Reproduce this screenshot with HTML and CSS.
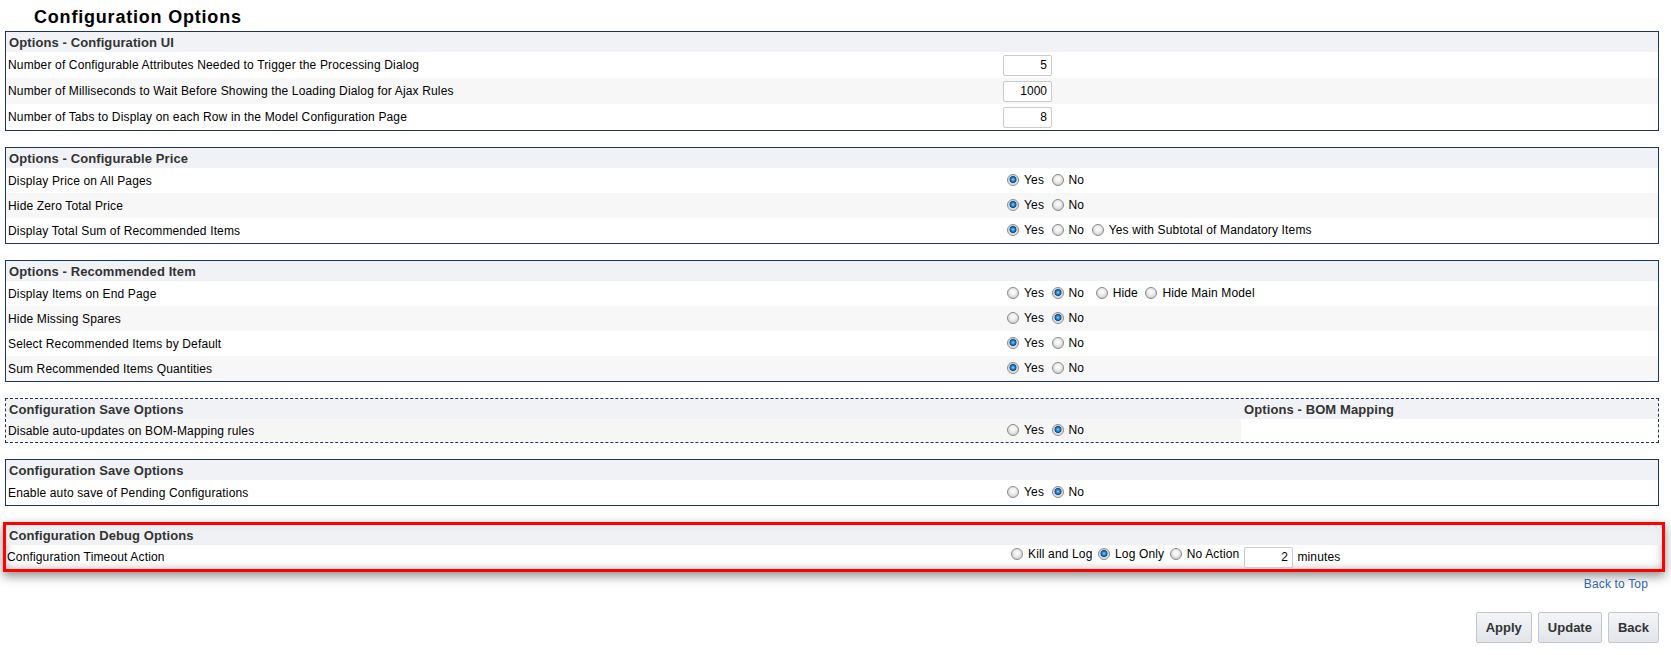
FILE: index.html
```html
<!DOCTYPE html>
<html lang="en">

<head>
  <meta charset="UTF-8">
  <meta name="viewport" content="width=device-width, initial-scale=1.0">
  <title>Configuration Options</title>
  <link rel="stylesheet" href="styles.css">
</head>

<body>

  <h1 class="page-title">Configuration Options</h1>

  <div class="content">

    <table class="opt-box">
      <tr><th colspan="2" class="box-head">Options - Configuration UI</th></tr>
      <tr class="tall">
        <td class="label">Number of Configurable Attributes Needed to Trigger the Processing Dialog</td>
        <td class="value"><input class="num" type="text" value="5"></td>
      </tr>
      <tr class="tall">
        <td class="label">Number of Milliseconds to Wait Before Showing the Loading Dialog for Ajax Rules</td>
        <td class="value"><input class="num" type="text" value="1000"></td>
      </tr>
      <tr class="tall">
        <td class="label">Number of Tabs to Display on each Row in the Model Configuration Page</td>
        <td class="value"><input class="num" type="text" value="8"></td>
      </tr>
    </table>

    <table class="opt-box">
      <tr><th colspan="2" class="box-head">Options - Configurable Price</th></tr>
      <tr>
        <td class="label">Display Price on All Pages</td>
        <td class="value">
          <label class="opt"><input type="radio" name="p1" checked>Yes</label>
          <label class="opt"><input type="radio" name="p1">No</label>
        </td>
      </tr>
      <tr>
        <td class="label">Hide Zero Total Price</td>
        <td class="value">
          <label class="opt"><input type="radio" name="p2" checked>Yes</label>
          <label class="opt"><input type="radio" name="p2">No</label>
        </td>
      </tr>
      <tr>
        <td class="label">Display Total Sum of Recommended Items</td>
        <td class="value">
          <label class="opt"><input type="radio" name="p3" checked>Yes</label>
          <label class="opt"><input type="radio" name="p3">No</label>
          <label class="opt"><input type="radio" name="p3">Yes with Subtotal of Mandatory Items</label>
        </td>
      </tr>
    </table>

    <table class="opt-box">
      <tr><th colspan="2" class="box-head">Options - Recommended Item</th></tr>
      <tr>
        <td class="label">Display Items on End Page</td>
        <td class="value">
          <label class="opt"><input type="radio" name="r1">Yes</label>
          <label class="opt"><input type="radio" name="r1" checked>No</label>
          <label class="opt extra"><input type="radio" name="r1">Hide</label>
          <label class="opt"><input type="radio" name="r1">Hide Main Model</label>
        </td>
      </tr>
      <tr>
        <td class="label">Hide Missing Spares</td>
        <td class="value">
          <label class="opt"><input type="radio" name="r2">Yes</label>
          <label class="opt"><input type="radio" name="r2" checked>No</label>
        </td>
      </tr>
      <tr>
        <td class="label">Select Recommended Items by Default</td>
        <td class="value">
          <label class="opt"><input type="radio" name="r3" checked>Yes</label>
          <label class="opt"><input type="radio" name="r3">No</label>
        </td>
      </tr>
      <tr>
        <td class="label">Sum Recommended Items Quantities</td>
        <td class="value">
          <label class="opt"><input type="radio" name="r4" checked>Yes</label>
          <label class="opt"><input type="radio" name="r4">No</label>
        </td>
      </tr>
    </table>

    <!-- save options + bom mapping share one dashed frame -->
    <div class="dashed-box">
      <table class="opt-box inner save-part">
        <tr><th colspan="2" class="box-head">Configuration Save Options</th></tr>
        <tr class="split">
          <td class="label">Disable auto-updates on BOM-Mapping rules</td>
          <td class="value">
            <label class="opt"><input type="radio" name="b1">Yes</label>
            <label class="opt"><input type="radio" name="b1" checked>No</label>
          </td>
        </tr>
      </table>
      <table class="opt-box inner bom-part">
        <tr><th class="box-head">Options - BOM Mapping</th></tr>
        <tr class="blank"><td></td></tr>
      </table>
    </div>

    <table class="opt-box">
      <tr><th colspan="2" class="box-head">Configuration Save Options</th></tr>
      <tr>
        <td class="label">Enable auto save of Pending Configurations</td>
        <td class="value">
          <label class="opt"><input type="radio" name="s1">Yes</label>
          <label class="opt"><input type="radio" name="s1" checked>No</label>
        </td>
      </tr>
    </table>

    <div class="debug-box">
      <table class="opt-box inner">
        <tr><th colspan="2" class="box-head debug-head">Configuration Debug Options</th></tr>
        <tr class="debug-row">
          <td class="label">Configuration Timeout Action</td>
          <td class="value">
            <label class="opt"><input type="radio" name="d1">Kill and Log</label>
            <label class="opt tight"><input type="radio" name="d1" checked>Log Only</label>
            <label class="opt tight"><input type="radio" name="d1">No Action</label>
            <input class="num" type="text" value="2"> minutes
          </td>
        </tr>
      </table>
    </div>

    <div class="back-top"><a href="#">Back to Top</a></div>

    <div class="actions">
      <button class="btn">Apply</button>
      <button class="btn">Update</button>
      <button class="btn">Back</button>
    </div>

  </div>

</body>

</html>
```

FILE: styles.css
```css
/* page basics */
body {
  margin: 0;
  padding: 0;
  font-family: "Liberation Sans", Arial, sans-serif;
  font-size: 12px;
  letter-spacing: 0.15px;
  color: #000;
  background-color: #fff;
}

.page-title {
  margin: 0;
  padding: 6px 0 3px 34px;
  font-size: 18px;
  line-height: 22px;
  letter-spacing: 0.8px;
  font-weight: bold;
}

.content {
  padding: 0 12px 0 5px;
}

/* option boxes */
.opt-box {
  width: 100%;
  border-collapse: collapse;
  border: 1px solid #1d3661;
  margin-bottom: 16px;
}

.opt-box.inner {
  border: none;
  margin: 0;
}

.box-head {
  height: 20px;
  padding: 0 0 0 3px;
  text-align: left;
  font-size: 13px;
  letter-spacing: 0.1px;
  font-weight: bold;
  color: #333;
  background-color: #f1f2f6;
}

.opt-box td {
  height: 25px;
  padding: 0 2px;
  white-space: nowrap;
}

.opt-box tr.tall td {
  height: 26px;
}

.opt-box tr:nth-child(odd) td {
  background-color: #f7f7f7;
}

.label {
  width: 991px;
}

.value {
  padding-left: 0;
}

/* number fields */
.num {
  width: 49px;
  height: 21px;
  box-sizing: border-box;
  margin: 0;
  padding: 0 4px;
  border: 1px solid #cbcbcb;
  border-radius: 2px;
  font-family: "Liberation Sans", Arial, sans-serif;
  font-size: 12px;
  text-align: right;
  vertical-align: middle;
  color: #000;
}

/* radio buttons, drawn like the old windows ones */
.opt {
  display: inline-flex;
  align-items: center;
}

.opt.extra {
  margin-left: 4px;
}

.opt input {
  appearance: none;
  -webkit-appearance: none;
  width: 12px;
  height: 12px;
  margin: 0 5px 0 4px;
  border: 1px solid #8a8b8c;
  border-radius: 50%;
  box-sizing: border-box;
  background: radial-gradient(circle at 50% 40%, #ffffff 0, #eeeeee 3px, #cfcfcf 6px);
}

.opt input:checked {
  background: radial-gradient(circle at 50% 45%, #8fd0ff 0, #1f7bc4 2px, #0b4e86 3.2px, #d2d2d2 3.8px, #f3f3f3 6px);
}

.opt.tight input {
  margin-left: 2px;
}

/* dashed frame with two tables side by side */
.dashed-box {
  display: flex;
  border: 1px dashed #1d3661;
  margin-bottom: 16px;
}

.save-part {
  width: 1235px;
  flex: none;
}

.save-part tr.split td {
  height: 23px;
  background-color: #f6f6f6;
}

.bom-part {
  flex: 1;
  margin-left: 2px;
}

.bom-part tr.blank td {
  height: 23px;
  background-color: #fff;
}

/* highlighted debug options */
.debug-box {
  margin-left: -2px;
  margin-right: -6px;
  border: 3px solid #ff0000;
  box-shadow: 0 4px 10px rgba(0, 0, 0, 0.45), inset 0 0 8px rgba(0, 0, 0, 0.3);
}

.debug-box .opt-box td {
  height: 24px;
  background-color: transparent;
}

.debug-head {
  height: 20px;
  background-color: rgba(236, 237, 241, 0.8);
}

.debug-box .label {
  width: 996px;
  padding-left: 1px;
}

.debug-row .num {
  margin-left: 1px;
  margin-right: 1px;
}

/* footer bits */
.back-top {
  text-align: right;
  padding: 4px 11px 0 0;
  line-height: 16px;
}

.back-top a {
  color: #3063ad;
  text-decoration: none;
}

.actions {
  display: flex;
  justify-content: flex-end;
  gap: 6px;
  margin-top: 20px;
}

.btn {
  height: 31px;
  padding: 0 9px;
  border: 1px solid #c3c8cf;
  border-radius: 2px;
  background: linear-gradient(#f3f5f7, #e1e5ea);
  font-family: "Liberation Sans", Arial, sans-serif;
  font-size: 13px;
  font-weight: bold;
  color: #333;
}
```
